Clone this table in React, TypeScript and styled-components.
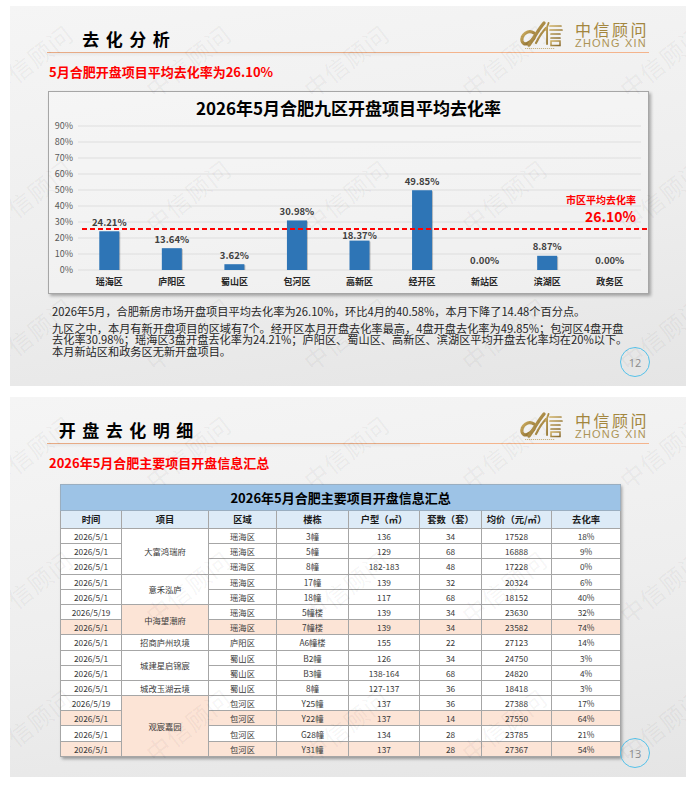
import React from "react";
import styled, { createGlobalStyle } from "styled-components";

type TBar = { name: string; value: number; labelGap?: number };

type TRow = {
  date: string;
  district: string;
  building: string;
  area: string;
  units: string;
  price: string;
  rate: string;
  hl?: boolean;
};

type TProject = { name: string; hl?: boolean; rows: TRow[] };

const bars: TBar[] = [
  { name: "瑶海区", value: 24.21 },
  { name: "庐阳区", value: 13.64 },
  { name: "蜀山区", value: 3.62 },
  { name: "包河区", value: 30.98 },
  { name: "高新区", value: 18.37, labelGap: 2 },
  { name: "经开区", value: 49.85 },
  { name: "新站区", value: 0 },
  { name: "滨湖区", value: 8.87 },
  { name: "政务区", value: 0 },
];

const projects: TProject[] = [
  {
    name: "大富鸿瑞府",
    rows: [
      { date: "2026/5/1", district: "瑶海区", building: "3幢", area: "136", units: "34", price: "17528", rate: "18%" },
      { date: "2026/5/1", district: "瑶海区", building: "5幢", area: "129", units: "68", price: "16888", rate: "9%" },
      { date: "2026/5/1", district: "瑶海区", building: "8幢", area: "182-183", units: "48", price: "17228", rate: "0%" },
    ],
  },
  {
    name: "意禾泓庐",
    rows: [
      { date: "2026/5/1", district: "瑶海区", building: "17幢", area: "139", units: "32", price: "20324", rate: "6%" },
      { date: "2026/5/1", district: "瑶海区", building: "18幢", area: "117", units: "68", price: "18152", rate: "40%" },
    ],
  },
  {
    name: "中海望潮府",
    hl: true,
    rows: [
      { date: "2026/5/19", district: "瑶海区", building: "5幢楼", area: "139", units: "34", price: "23630", rate: "32%" },
      { date: "2026/5/1", district: "瑶海区", building: "7幢楼", area: "139", units: "34", price: "23582", rate: "74%", hl: true },
    ],
  },
  {
    name: "招商庐州玖境",
    rows: [
      { date: "2026/5/1", district: "庐阳区", building: "A6幢楼", area: "155", units: "22", price: "27123", rate: "14%" },
    ],
  },
  {
    name: "城建星启锦宸",
    rows: [
      { date: "2026/5/1", district: "蜀山区", building: "B2幢", area: "126", units: "34", price: "24750", rate: "3%" },
      { date: "2026/5/1", district: "蜀山区", building: "B3幢", area: "138-164", units: "68", price: "24820", rate: "4%" },
    ],
  },
  {
    name: "城改玉湖云境",
    rows: [
      { date: "2026/5/1", district: "蜀山区", building: "8幢", area: "127-137", units: "36", price: "18418", rate: "3%" },
    ],
  },
  {
    name: "观宸嘉园",
    hl: true,
    rows: [
      { date: "2026/5/19", district: "包河区", building: "Y25幢", area: "137", units: "36", price: "27388", rate: "17%" },
      { date: "2026/5/1", district: "包河区", building: "Y22幢", area: "137", units: "14", price: "27550", rate: "64%", hl: true },
      { date: "2026/5/1", district: "包河区", building: "G28幢", area: "134", units: "28", price: "23785", rate: "21%" },
      { date: "2026/5/1", district: "包河区", building: "Y31幢", area: "137", units: "28", price: "27367", rate: "54%", hl: true },
    ],
  },
];

const columns = ["时间", "项目", "区域", "楼栋", "户型（㎡）", "套数（套）", "均价（元/㎡）", "去化率"];
const colWidths = [61, 87, 68, 72, 71, 62, 70, 69];

const markCols = [20, 178, 336, 494, 652];
const markRows = [55, 190, 328];

const GlobalStyle = createGlobalStyle`
  html, body {
    margin: 0;
    padding: 0;
    background: #ffffff;
  }
  body {
    font-family: "Noto Sans CJK SC", "Noto Sans", sans-serif;
  }
`;

const Page = styled.div`
  display: flex;
  flex-direction: column;
  gap: 11px;
  padding: 6px 0 0 10px;
`;

const Slide = styled.section`
  position: relative;
  display: flex;
  flex-direction: column;
  width: 676px;
  height: 380px;
  overflow: hidden;
  background: linear-gradient(172deg, #f5f5f5 0%, #eeeeee 55%, #e5e5e5 100%);
`;

const Header = styled.header`
  position: relative;
  display: flex;
  justify-content: space-between;
  align-items: flex-end;
  height: 46px;
  margin: 0 37px;
  border-bottom: 1.5px solid #f4b48c;

  &::after {
    content: "";
    position: absolute;
    left: 0;
    top: 100%;
    width: 62%;
    height: 5px;
    background: linear-gradient(180deg, rgba(0, 0, 0, 0.06), rgba(0, 0, 0, 0));
  }
`;

const SlideTitle = styled.h2`
  width: 158px;
  margin: 0 0 3px 0;
  font-size: 17px;
  line-height: 20px;
  font-weight: 700;
  letter-spacing: 6.5px;
  text-indent: 6.5px;
  text-align: center;
  color: #000000;
`;

const Logo = styled.div`
  display: flex;
  align-items: center;
  gap: 10px;
  margin-bottom: 2px;
`;

const LogoText = styled.div`
  display: flex;
  flex-direction: column;
  color: #a3863e;
`;

const LogoCn = styled.span`
  font-size: 16px;
  line-height: 17px;
  letter-spacing: 2.5px;
`;

const LogoEn = styled.span`
  font-family: "Liberation Sans", Arial, sans-serif;
  font-size: 11px;
  line-height: 11px;
  letter-spacing: 1.2px;
  color: #ad9455;
`;

const Subtitle = styled.h3`
  margin: 9.5px 0 0 39px;
  font-size: 13px;
  line-height: 18px;
  font-weight: 700;
  color: #ff0000;
`;

const ChartCard = styled.div`
  display: flex;
  flex-direction: column;
  box-sizing: border-box;
  width: 601px;
  height: 203px;
  margin: 10px 0 0 38px;
  border: 1px solid #a6a6a6;
  background: rgba(255, 255, 255, 0.25);
  box-shadow: 2px 2px 3px rgba(0, 0, 0, 0.3);
`;

const ChartTitle = styled.div`
  padding-top: 5px;
  font-size: 17px;
  line-height: 22px;
  font-weight: 700;
  text-align: center;
  color: #000000;
`;

const Plot = styled.svg`
  display: block;
  font-family: "Noto Sans CJK SC", "Noto Sans", sans-serif;
`;

const Summary = styled.div`
  margin: 12px 0 0 42px;
  font-size: 11.2px;
  line-height: 11.4px;
  color: #262626;
`;

const SummaryPara = styled.p<{ $gap?: boolean }>`
  margin: ${(p) => (p.$gap ? "6px" : "0")} 0 0 0;
`;

const Line = styled.span`
  display: block;
  white-space: nowrap;
`;

const TableWrap = styled.div`
  width: 560px;
  margin: 12px 0 0 50px;
  background: #ffffff;
  box-shadow: 2px 2px 3px rgba(0, 0, 0, 0.35);
`;

const Table = styled.table`
  width: 560px;
  border-collapse: collapse;
  table-layout: fixed;
  font-size: 8.3px;
  color: #3a3a3a;
`;

const TitleRow = styled.tr`
  height: 26px;
`;

const TitleCell = styled.th`
  padding: 0;
  background: #9dc3e6;
  border: 1px solid #9aaec0;
  font-size: 13px;
  font-weight: 700;
  color: #000000;
`;

const HeadRow = styled.tr`
  height: 18.5px;
`;

const HeadCell = styled.th`
  padding: 0;
  background: #ddebf7;
  border: 1px solid #a6a6a6;
  font-size: 9.3px;
  font-weight: 700;
  color: #1a1a1a;
`;

const DataRow = styled.tr`
  height: 15.2px;
`;

const Cell = styled.td<{ $hl?: boolean }>`
  padding: 0;
  border: 1px solid #a6a6a6;
  text-align: center;
  line-height: 12px;
  white-space: nowrap;
  background: ${(p) => (p.$hl ? "#fce4d6" : "#ffffff")};
`;

const PageBadge = styled.div`
  position: absolute;
  right: 36px;
  bottom: 9px;
  display: flex;
  align-items: center;
  justify-content: center;
  box-sizing: border-box;
  width: 30px;
  height: 30px;
  border: 1.5px solid #55c2ea;
  border-radius: 50%;
  font-family: "Open Sans", "Liberation Sans", sans-serif;
  font-size: 11px;
  color: #8c8c8c;
`;

const Watermark = styled.span`
  position: absolute;
  z-index: 3;
  transform: translate(-50%, -50%) rotate(-38deg);
  font-size: 24px;
  line-height: 24px;
  letter-spacing: 1px;
  white-space: nowrap;
  color: rgba(0, 0, 0, 0.05);
  pointer-events: none;
`;

const LogoMark = () => (
  <svg width="46" height="30" viewBox="0 0 46 30">
    <defs>
      <linearGradient id="gold" x1="0" y1="0" x2="1" y2="1">
        <stop offset="0" stopColor="#cfb063" />
        <stop offset="1" stopColor="#86672a" />
      </linearGradient>
    </defs>
    <path d="M15 13 C9 9 2 15 3 21 C4 26 11 24 15 18" fill="none" stroke="url(#gold)" strokeWidth="3.2" strokeLinecap="round" />
    <path d="M10 25 C15 18 19 10 25 3" fill="none" stroke="url(#gold)" strokeWidth="3.4" strokeLinecap="round" />
    <path d="M17 23 C20 17 23 12 27 8" fill="none" stroke="url(#gold)" strokeWidth="2.2" strokeLinecap="round" />
    <path d="M29.5 3 L27 10 M28 8 L28 24" fill="none" stroke="url(#gold)" strokeWidth="1.9" strokeLinecap="round" />
    <path d="M31 6 H42 M31 10 H43 M32 14 H41 M32 18 H41" fill="none" stroke="url(#gold)" strokeWidth="1.7" strokeLinecap="round" />
    <path d="M32 21 H41 V25.5 H32 Z" fill="none" stroke="url(#gold)" strokeWidth="1.5" />
    <path d="M6 28.5 H36" stroke="#b89b55" strokeWidth="0.7" strokeDasharray="1.2 0.8" />
  </svg>
);

const SlideHeader = ({ title }: { title: string }) => (
  <Header>
    <SlideTitle>{title}</SlideTitle>
    <Logo>
      <LogoMark />
      <LogoText>
        <LogoCn>中信顾问</LogoCn>
        <LogoEn>ZHONG XIN</LogoEn>
      </LogoText>
    </Logo>
  </Header>
);

const Watermarks = () => (
  <>
    {markRows.map((y) =>
      markCols.map((x) => (
        <Watermark key={`${x}-${y}`} style={{ left: x, top: y }}>
          中信顾问
        </Watermark>
      ))
    )}
  </>
);

const BarChart = () => {
  const x0 = 29;
  const x1 = 592;
  const y0 = 151;
  const unit = 1.6;
  const step = (x1 - x0) / bars.length;
  const avgY = 110;

  return (
    <Plot width="599" height="174">
      {[0, 10, 20, 30, 40, 50, 60, 70, 80, 90].map((t) => {
        const y = y0 - t * unit;
        return (
          <g key={t}>
            <line x1={x0} x2={x1} y1={y} y2={y} stroke="#d9d9d9" strokeWidth="0.8" />
            <text x="24" y={y + 3.2} fontSize="9" fill="#595959" textAnchor="end">
              {t}%
            </text>
          </g>
        );
      })}
      {bars.map((b, i) => {
        const cx = x0 + step * (i + 0.5);
        const h = b.value * unit;
        const gap = b.labelGap ?? 5.6;
        return (
          <g key={b.name}>
            {h > 0 && (
              <>
                <rect x={cx - 9} y={y0 - h + 1} width="20" height={h - 1} fill="rgba(0,0,0,0.22)" />
                <rect x={cx - 10} y={y0 - h} width="20" height={h} fill="#2e75b6" />
              </>
            )}
            <text x={cx} y={y0 - h - gap} fontSize="9.5" fontWeight="700" fill="#404040" textAnchor="middle">
              {b.value.toFixed(2)}%
            </text>
            <text x={cx} y="166.3" fontSize="9" fontWeight="700" fill="#262626" textAnchor="middle">
              {b.name}
            </text>
          </g>
        );
      })}
      <line x1="33" x2="599" y1={avgY} y2={avgY} stroke="#ff0000" strokeWidth="2" strokeDasharray="5 3" />
      <text x="587" y="84.5" fontSize="10" fontWeight="700" fill="#ff0000" textAnchor="end">
        市区平均去化率
      </text>
      <text x="587" y="103" fontSize="14" fontWeight="700" fill="#ff0000" textAnchor="end">
        26.10%
      </text>
    </Plot>
  );
};

const SalesTable = () => (
  <TableWrap>
    <Table>
      <colgroup>
        {colWidths.map((w, i) => (
          <col key={i} style={{ width: w }} />
        ))}
      </colgroup>
      <thead>
        <TitleRow>
          <TitleCell colSpan={8}>2026年5月合肥主要项目开盘信息汇总</TitleCell>
        </TitleRow>
        <HeadRow>
          {columns.map((c) => (
            <HeadCell key={c}>{c}</HeadCell>
          ))}
        </HeadRow>
      </thead>
      <tbody>
        {projects.map((p) =>
          p.rows.map((r, i) => (
            <DataRow key={`${p.name}-${r.building}`}>
              <Cell $hl={r.hl}>{r.date}</Cell>
              {i === 0 && (
                <Cell $hl={p.hl} rowSpan={p.rows.length}>
                  {p.name}
                </Cell>
              )}
              <Cell $hl={r.hl}>{r.district}</Cell>
              <Cell $hl={r.hl}>{r.building}</Cell>
              <Cell $hl={r.hl}>{r.area}</Cell>
              <Cell $hl={r.hl}>{r.units}</Cell>
              <Cell $hl={r.hl}>{r.price}</Cell>
              <Cell $hl={r.hl}>{r.rate}</Cell>
            </DataRow>
          ))
        )}
      </tbody>
    </Table>
  </TableWrap>
);

const App = () => {
  return (
    <Page>
      <GlobalStyle />
      <Slide>
        <SlideHeader title="去化分析" />
        <Subtitle>5月合肥开盘项目平均去化率为26.10%</Subtitle>
        <ChartCard>
          <ChartTitle>2026年5月合肥九区开盘项目平均去化率</ChartTitle>
          <BarChart />
        </ChartCard>
        <Summary>
          <SummaryPara>
            <Line>2026年5月，合肥新房市场开盘项目平均去化率为26.10%，环比4月的40.58%，本月下降了14.48个百分点。</Line>
          </SummaryPara>
          <SummaryPara $gap>
            <Line>九区之中，本月有新开盘项目的区域有7个。经开区本月开盘去化率最高，4盘开盘去化率为49.85%；包河区4盘开盘</Line>
            <Line>去化率30.98%；瑶海区3盘开盘去化率为24.21%；庐阳区、蜀山区、高新区、滨湖区平均开盘去化率均在20%以下。</Line>
            <Line>本月新站区和政务区无新开盘项目。</Line>
          </SummaryPara>
        </Summary>
        <PageBadge>12</PageBadge>
        <Watermarks />
      </Slide>
      <Slide>
        <SlideHeader title="开盘去化明细" />
        <Subtitle>2026年5月合肥主要项目开盘信息汇总</Subtitle>
        <SalesTable />
        <PageBadge>13</PageBadge>
        <Watermarks />
      </Slide>
    </Page>
  );
};

export default App;
